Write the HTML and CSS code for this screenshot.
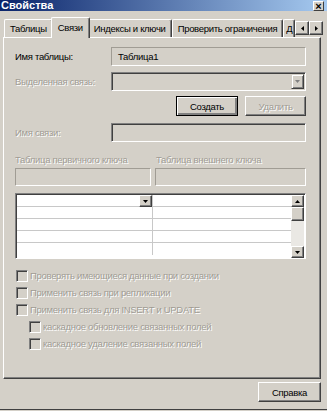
FILE: index.html
```html
<!DOCTYPE html>
<html lang="ru">
<head>
    <meta charset="UTF-8" />
    <title>Свойства</title>
    <link rel="stylesheet" href="styles.css">
</head>
<body>

<div class="window">

    <!-- Заголовок окна -->
    <div class="titlebar">
        <span class="title">Свойства</span>
        <span class="close-btn">×</span>
    </div>

    <!-- Вкладки -->
    <div class="tabs">
        <div class="tab">Таблицы</div>
        <div class="tab tab-active">Связи</div>
        <div class="tab">Индексы и ключи</div>
        <div class="tab">Проверить ограничения</div>
        <div class="tab tab-cut">Д</div>
        <div class="tab-scroll">
            <span class="mini-btn"><svg width="3" height="5" viewBox="0 0 3 5"><path d="M3 0v5L0 2.5z"/></svg></span>
            <span class="mini-btn"><svg width="3" height="5" viewBox="0 0 3 5"><path d="M0 0v5l3-2.5z"/></svg></span>
        </div>
    </div>

    <!-- Содержимое вкладки "Связи" -->
    <div class="panel">
        <div class="form-row">
            <span class="lbl">Имя таблицы:</span>
            <div class="field">Таблица1</div>
        </div>

        <div class="form-row row-combo">
            <span class="lbl disabled">Выделенная связь:</span>
            <div class="field field-deep combo">
                <span class="combo-btn"><svg width="5" height="3" viewBox="0 0 5 3"><path d="M0 0h5L2.5 3z" fill="#808080"/></svg></span>
            </div>
        </div>

        <div class="btn-row">
            <button class="btn btn-default">Создать</button>
            <button class="btn btn-delete" disabled>Удалить</button>
        </div>

        <div class="form-row row-name">
            <span class="lbl disabled">Имя связи:</span>
            <div class="field field-deep"></div>
        </div>

        <div class="keys">
            <div class="key-col key-left">
                <span class="lbl disabled">Таблица первичного ключа</span>
                <div class="field"></div>
            </div>
            <div class="key-col key-right">
                <span class="lbl disabled">Таблица внешнего ключа</span>
                <div class="field"></div>
            </div>
        </div>

        <!-- Таблица полей -->
        <div class="grid">
            <div class="grid-body">
                <div class="grid-row">
                    <div class="cell cell-left">
                        <span class="cell-btn"><svg width="5" height="3" viewBox="0 0 5 3"><path d="M0 0h5L2.5 3z"/></svg></span>
                    </div>
                    <div class="cell"></div>
                </div>
                <div class="grid-row"><div class="cell cell-left"></div><div class="cell"></div></div>
                <div class="grid-row"><div class="cell cell-left"></div><div class="cell"></div></div>
                <div class="grid-row"><div class="cell cell-left"></div><div class="cell"></div></div>
                <div class="grid-row"><div class="cell cell-left"></div><div class="cell"></div></div>
            </div>
            <div class="vscroll">
                <span class="mini-btn"><svg width="5" height="3" viewBox="0 0 5 3"><path d="M0 3h5L2.5 0z"/></svg></span>
                <span class="mini-btn thumb"></span>
                <span class="track"></span>
                <span class="mini-btn"><svg width="5" height="3" viewBox="0 0 5 3"><path d="M0 0h5L2.5 3z"/></svg></span>
            </div>
        </div>

        <!-- Флажки -->
        <div class="checks">
            <div class="check"><span class="box"></span>Проверять имеющиеся данные при создании</div>
            <div class="check"><span class="box"></span>Применить связь при репликации</div>
            <div class="check"><span class="box"></span>Применить связь для INSERT и UPDATE</div>
            <div class="check check-sub"><span class="box"></span>каскадное обновление связанных полей</div>
            <div class="check check-sub"><span class="box"></span>каскадное удаление связанных полей</div>
        </div>
    </div>

    <div class="footer">
        <button class="btn btn-help">Справка</button>
    </div>

</div>

</body>
</html>
```

FILE: styles.css
```css
/* Общие стили */
* {
    box-sizing: border-box;
    margin: 0;
    padding: 0;
}

body {
    font-family: 'Liberation Sans', Arial, sans-serif;
    font-size: 9.5px;
    letter-spacing: -0.3px;
    color: #000;
    background: #d4d0c8;
    width: 327px;
    height: 411px;
    overflow: hidden;
}

.window {
    height: 410px;
    border-bottom: 1px solid #404040;
}

/* Заголовок */
.titlebar {
    height: 11px;
    display: flex;
    justify-content: space-between;
    align-items: center;
    background: linear-gradient(to right, #0a246a, #a6caf0);
    color: #fff;
    padding: 0 3px 0 1px;
}
.title {
    font-weight: bold;
    font-size: 11px;
    line-height: 11px;
    letter-spacing: 0;
}
.close-btn {
    width: 11px;
    height: 10px;
    background: #d4d0c8;
    color: #000;
    font-weight: bold;
    font-size: 11px;
    line-height: 9px;
    letter-spacing: 0;
    text-align: center;
    border: 1px solid;
    border-color: #fff #404040 #404040 #fff;
}

/* Вкладки */
.tabs {
    display: flex;
    align-items: flex-end;
    height: 26px;
    padding-left: 4px;
    position: relative;
    z-index: 1;
}
.tab {
    height: 18px;
    line-height: 17px;
    padding: 0 5px;
    white-space: nowrap;
    border: 1px solid;
    border-bottom: none;
    border-color: #fff #404040 #fff #fff;
    border-radius: 2px 2px 0 0;
    box-shadow: inset -1px 0 #808080;
}
.tab-active {
    height: 21px;
    line-height: 19px;
    margin: 0 -2px -1px;
    padding: 0 6px;
    background: #d4d0c8;
    position: relative;
}
.tab-cut {
    width: 12px;
    padding: 0 2px;
    overflow: hidden;
    text-decoration: underline;
}
.tab-scroll {
    display: flex;
    margin-left: auto;
    margin-right: 4px;
    margin-bottom: 2px;
}
.mini-btn {
    width: 14px;
    height: 14px;
    display: flex;
    align-items: center;
    justify-content: center;
    background: #d4d0c8;
    border: 1px solid;
    border-color: #fff #404040 #404040 #fff;
    box-shadow: inset -1px -1px #808080;
}

/* Панель вкладки */
.panel {
    height: 342px;
    margin: 0 6px 0 3px;
    padding: 9px 14px 0 11px;
    border: 1px solid;
    border-color: #fff #404040 #404040 #fff;
    box-shadow: inset -1px -1px #808080;
}

.lbl {
    white-space: nowrap;
}
.disabled {
    color: #a09c94;
    text-shadow: 1px 1px #fff;
}

.form-row {
    display: flex;
    align-items: center;
}
.form-row .lbl {
    width: 96px;
}
.row-combo {
    margin-top: 6px;
}
.row-name {
    margin-top: 7px;
}

.field {
    flex: 1;
    height: 19px;
    line-height: 17px;
    padding-left: 6px;
    background: #d4d0c8;
    border: 1px solid;
    border-color: #a09c94 #fff #fff #a09c94;
}
.field-deep {
    border-color: #808080 #fff #fff #808080;
    box-shadow: inset 1px 1px #404040;
}
.combo {
    display: flex;
    justify-content: flex-end;
    padding: 1px;
}
.combo-btn {
    width: 13px;
    height: 15px;
    display: flex;
    align-items: center;
    justify-content: center;
    border: 1px solid;
    border-color: #d4d0c8 #404040 #404040 #d4d0c8;
    box-shadow: inset 1px 1px #fff, inset -1px -1px #808080;
}

/* Кнопки */
.btn-row {
    display: flex;
    justify-content: flex-end;
    gap: 7px;
    margin-top: 5px;
}
.btn {
    height: 20px;
    font-family: inherit;
    font-size: inherit;
    letter-spacing: inherit;
    color: #000;
    background: #d4d0c8;
    border: 1px solid;
    border-color: #fff #404040 #404040 #fff;
    box-shadow: inset -1px -1px #808080;
}
.btn-default {
    width: 62px;
    border-color: #000;
    box-shadow: inset 1px 1px #fff, inset -2px -2px #808080;
}
.btn-delete {
    width: 61px;
    color: #a09c94;
    text-shadow: 1px 1px #fff;
}

/* Ключи */
.keys {
    display: flex;
    gap: 4px;
    margin-top: 12px;
}
.key-col {
    display: flex;
    flex-direction: column;
    gap: 2px;
}
.key-col .lbl {
    line-height: 12px;
}
.key-left {
    width: 136px;
}
.key-right {
    flex: 1;
    padding-left: 1px;
}
.key-right .field {
    margin-left: -1px;
}
.key-col .field {
    flex: none;
    height: 18px;
}

/* Сетка */
.grid {
    display: flex;
    height: 66px;
    margin-top: 7px;
    background: #fff;
    border: 1px solid;
    border-color: #808080 #fff #fff #808080;
    box-shadow: inset 1px 1px #404040;
    padding: 1px 1px 0 1px;
}
.grid-body {
    flex: 1;
}
.grid-row {
    display: flex;
    height: 12px;
    border-bottom: 1px solid #c8c8c8;
}
.grid-row:last-child {
    border-bottom: none;
}
.cell {
    flex: 1;
}
.cell-left {
    flex: none;
    width: 136px;
    border-right: 1px solid #c8c8c8;
    display: flex;
    justify-content: flex-end;
}
.cell-btn {
    width: 13px;
    height: 12px;
    display: flex;
    align-items: center;
    justify-content: center;
    background: #d4d0c8;
    border: 1px solid;
    border-color: #fff #404040 #404040 #fff;
    box-shadow: inset -1px -1px #808080;
}
.vscroll {
    width: 13px;
    display: flex;
    flex-direction: column;
}
.vscroll .mini-btn {
    width: 13px;
    height: 12px;
}
.vscroll .thumb {
    height: 14px;
}
.track {
    flex: 1;
    background: #eae8e4;
}

/* Флажки */
.checks {
    margin-top: 8px;
}
.check {
    display: flex;
    align-items: center;
    gap: 2px;
    height: 17px;
    padding-left: 1px;
    color: #a09c94;
    text-shadow: 1px 1px #fff;
    white-space: nowrap;
}
.check-sub {
    padding-left: 14px;
}
.box {
    width: 12px;
    height: 12px;
    background: #d4d0c8;
    border: 1px solid;
    border-color: #808080 #fff #fff #808080;
    box-shadow: inset 1px 1px #404040;
}

/* Нижняя часть */
.footer {
    display: flex;
    justify-content: flex-end;
    padding: 3px 6px 0 0;
}
.btn-help {
    width: 63px;
}
```
